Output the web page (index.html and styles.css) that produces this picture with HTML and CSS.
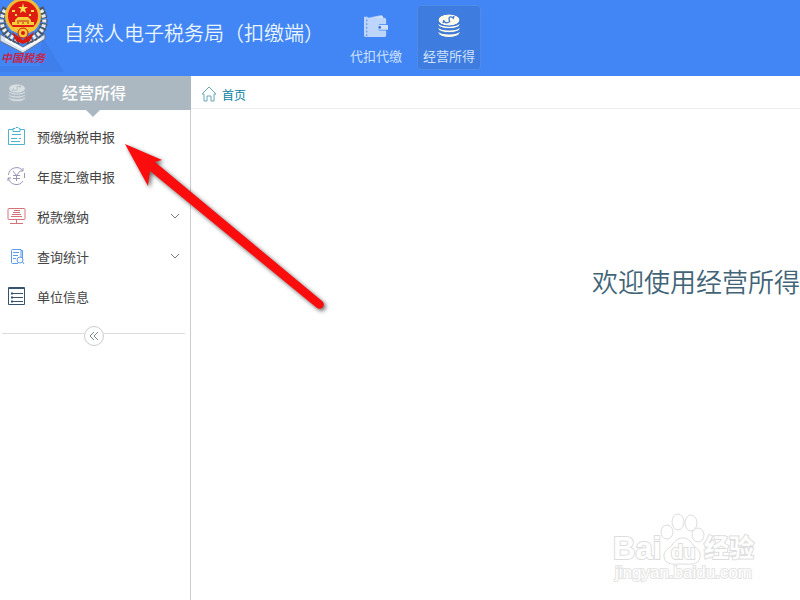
FILE: index.html
```
<!DOCTYPE html>
<html lang="zh-CN">
<head>
  <meta charset="UTF-8" />
  <meta name="viewport" content="width=device-width, initial-scale=1.0"/>
  <title>自然人电子税务局（扣缴端）</title>
  <link rel="stylesheet" href="styles.css">
</head>
<body>

  <svg class="symbols" aria-hidden="true">
    <symbol id="coins" viewBox="0 0 24 24">
      <g fill="currentColor">
        <path d="M1 9c2 4 20 4 22 0v2c-2 5-20 5-22 0z"/>
        <path d="M1 13c2 4 20 4 22 0v2c-2 5-20 5-22 0z"/>
        <path d="M1 17c2 4 20 4 22 0v2c-2 6-20 6-22 0z"/>
        <ellipse cx="12" cy="6" rx="11" ry="6"/>
      </g>
      <path d="M16 3.500c-2-1-4-1-4 1s2 3-1 4c-1 .5-3 0-4-1M17 2l-1 3M7 6l-1 3" fill="none" stroke-width="1.300"/>
    </symbol>
  </svg>

  <header class="header">
    <svg class="logo" viewBox="0 0 64 76" role="img" aria-label="中国税务">
      <path d="M42 36l22 36H0V66h40z" fill="#3e7feb"/>
      <path d="M0 34l23 13 22-13v5L23 53 0 41z" fill="#d9e2ee" stroke="#60718d"/>
      <path d="M5 39l18 10 18-10" fill="none" stroke="#fff" stroke-width="2"/>
      <path d="M6 8C-3 24 4 37 21 41M40 8c9 16 2 29-15 33" fill="none" stroke="#4c5560" stroke-width="7" stroke-dasharray="3 1"/>
      <path d="M5 10C-3 24 4 36 21 41M41 10c8 14 1 26-16 31" fill="none" stroke="#e8ebe9" stroke-width="4" stroke-dasharray="3 2"/>
      <path d="M12 32l11 8 11-8-4 9-7 3-7-3z" fill="#d71912"/>
      <circle cx="23" cy="16" r="18" fill="#f1bd38"/>
      <circle cx="23" cy="16" r="15" fill="#df1c12"/>
      <path d="M23 3l1 4h4l-3 2 1 4-3-2-3 2 1-4-3-2h4z" fill="#ffe04a"/>
      <path d="M12 10h3v2h-3zM31 10h3v2h-3zM15 14h2v2h-2zM29 14h2v2h-2z" fill="#ffe04a"/>
      <path d="M15 20l3-3h10l3 3v2h3v3H12v-3h3z" fill="#f8cf3a"/>
      <path d="M17 21h12M18 24v-2M23 24v-2M28 24v-2" stroke="#bd2815"/>
      <path d="M9 27h28l-3 4H12z" fill="#f6c437"/>
      <circle cx="23" cy="33" r="5" fill="#f7c837" stroke="#d31b13"/>
      <circle cx="23" cy="33" r="2" fill="#d71912"/>
      <text class="logo-text" x="1" y="62">中国税务</text>
    </svg>
    <h1>自然人电子税务局（扣缴端）</h1>
    <nav class="modules">
      <a href="#withhold" class="module">
        <svg class="wallet" viewBox="0 0 28 26" aria-hidden="true">
          <path d="M5 4l15-3 2 3z" fill="#a9c9fa"/>
          <path d="M9 4l12-2 1 3H9z" fill="#d6e5fc"/>
          <path d="M1 3h4v1h18a2 2 0 0 1 2 2v5h-7a4 4 0 0 0 0 7h7v5a2 2 0 0 1-2 2H3a2 2 0 0 1-2-2z" fill="#bdd5fb"/>
          <path d="M4 6v18" stroke="#4b83e4" stroke-dasharray="2 2"/>
          <path d="M18 12h9v5h-9a2 2 0 0 1 0-5z" fill="#cfe0fc"/>
          <circle cx="18" cy="14.500" r="1.500" fill="#3975d5"/>
        </svg>
        <span>代扣代缴</span>
      </a>
      <a href="#business" class="module active">
        <svg class="coins" aria-hidden="true"><use href="#coins"/></svg>
        <span>经营所得</span>
      </a>
    </nav>
  </header>

  <div class="page">
    <aside class="sidebar">
      <div class="sidebar-title">
        <svg class="title-icon" aria-hidden="true"><use href="#coins"/></svg>
        <h2>经营所得</h2>
      </div>
      <nav class="menu">
        <a href="#prepay">
          <svg class="icon teal" viewBox="0 0 20 20" aria-hidden="true">
            <path d="M6 3.500H1.500v15h16v-15H13M6 2.500h2l1-1h2l1 1h1v3H6zM5 8.500h9M4 12.500h6M4 15.500h9M12 12.500h2"/>
          </svg>
          <span>预缴纳税申报</span>
        </a>
        <a href="#annual">
          <svg class="icon purple" viewBox="0 0 20 20" aria-hidden="true">
            <path d="M1.500 9A8 8 0 0 1 16 5M1.500 12A8 8 0 0 0 16 15M17.500 7v5M16 2v3h-3M1 15v-3h3M6 5l3.500 4.500L13 5M9.500 9.500V15M6 9.500h7M6 12.500h7"/>
          </svg>
          <span>年度汇缴申报</span>
        </a>
        <a href="#payment">
          <svg class="icon red" viewBox="0 0 20 20" aria-hidden="true">
            <path d="M2 2.500h15a1 1 0 0 1 1 1v9a1 1 0 0 1-1 1H2a1 1 0 0 1-1-1v-9a1 1 0 0 1 1-1zM7 4.500h6M6 6.500h7M5 8.500h9M4 10.500h11M9.500 14v4M3 17.500h13"/>
          </svg>
          <span>税款缴纳</span>
          <svg class="chevron" viewBox="0 0 10 6" aria-hidden="true"><path d="M1 1l4 4 4-4"/></svg>
        </a>
        <a href="#query">
          <svg class="icon blue" viewBox="0 0 20 20" aria-hidden="true">
            <path d="M11 17.500H5.500a1 1 0 0 1-1-1v-12a1 1 0 0 1 1-1h8.500V11M14 4.500h1.500V12M6 6.500h6M6 9.500h5M6 12.500h3M15 15l2 3"/>
            <circle cx="13" cy="14" r="3"/>
          </svg>
          <span>查询统计</span>
          <svg class="chevron" viewBox="0 0 10 6" aria-hidden="true"><path d="M1 1l4 4 4-4"/></svg>
        </a>
        <a href="#company">
          <svg class="icon navy" viewBox="0 0 20 20" aria-hidden="true">
            <path d="M1.500 1.500h16v17h-16zM1 2.500h17M5 7.500h11M5 11.500h11M5 15.500h11"/>
            <path d="M4 7.500h2M4 11.500h2M4 15.500h2" stroke-width="2"/>
          </svg>
          <span>单位信息</span>
        </a>
      </nav>
      <div class="collapse">
        <button type="button" aria-label="收起菜单">
          <svg viewBox="0 0 10 8" aria-hidden="true"><path d="M5 0L1 4l4 4M9 0L5 4l4 4"/></svg>
        </button>
      </div>
    </aside>

    <main class="content">
      <div class="breadcrumb">
        <a href="#home">
          <svg viewBox="0 0 16 16" aria-hidden="true"><path d="M1 8l7-7 7 7h-2v7h-3v-5H6v5H3V8z"/></svg>
          <span>首页</span>
        </a>
      </div>
      <p class="welcome">欢迎使用经营所得</p>
    </main>
  </div>

  <svg class="arrow" viewBox="0 0 210 180" aria-hidden="true">
    <path d="M5 4l37 16-7 2 167 139a4 4 0 0 1-5 7L30 31l-2 15z"/>
  </svg>

  <svg class="watermark" viewBox="0 0 160 80" aria-hidden="true">
    <g class="paw">
      <ellipse cx="67" cy="24" rx="6" ry="7"/>
      <ellipse cx="78" cy="14" rx="6" ry="8"/>
      <ellipse cx="91" cy="15" rx="6" ry="8"/>
      <ellipse cx="98" cy="27" rx="6" ry="7"/>
      <path d="M72 37c7-10 16-9 21 0 5 4 8 7 7 12-2 9-10 7-18 7s-16 2-18-7c-1-5 4-8 8-12z"/>
    </g>
    <text class="brand" x="13" y="51">Bai</text>
    <text class="du" x="71" y="51">du</text>
    <text class="brand-cn" x="104" y="49">经验</text>
    <text class="site" x="15" y="70">jingyan.baidu.com</text>
  </svg>

</body>
</html>
```
FILE: styles.css
```
* {
  box-sizing: border-box;
}

body {
  margin: 0;
  min-height: 100vh;
  display: flex;
  flex-direction: column;
  position: relative;
  overflow-x: hidden;
  background: #fff;
  color: #444;
  font-family: "Noto Sans CJK SC", sans-serif;
  font-size: 13px;
}

a {
  color: inherit;
  text-decoration: none;
}

h1, h2, p {
  margin: 0;
}

.symbols {
  position: absolute;
  width: 0;
  height: 0;
}

.header {
  display: flex;
  height: 76px;
  background: #4285f4;
  color: #e8f5ff;
}

.logo {
  width: 64px;
  height: 76px;
  flex: none;
}

.logo-text {
  fill: #c5264a;
  font-family: "Noto Sans CJK SC", sans-serif;
  font-size: 11px;
  font-style: italic;
  font-weight: bold;
}

.header h1 {
  font-size: 20px;
  line-height: 66px;
  font-weight: 350;
  white-space: nowrap;
}

.modules {
  display: flex;
  gap: 9px;
  padding: 5px 0 6px 20px;
}

.module {
  display: flex;
  flex-direction: column;
  align-items: center;
  gap: 8px;
  width: 64px;
  padding-top: 8px;
  border: 1px solid transparent;
  border-radius: 4px;
  line-height: 20px;
  color: #cfe2ff;
}

.module.active {
  background: #3e7ce0;
  border-color: #508be9;
}

.wallet,
.coins {
  width: 28px;
  height: 24px;
}

.coins {
  color: #fffbe8;
  stroke: #3975d5;
}

.page {
  display: flex;
  flex: 1;
}

.sidebar {
  width: 191px;
  flex: none;
  border-right: 1px solid #ccc;
}

.sidebar-title {
  position: relative;
  display: flex;
  align-items: center;
  height: 34px;
  margin-right: -1px;
  padding-left: 8px;
  background: #abb8c2;
  color: #fff;
}

.sidebar-title::after {
  content: "";
  position: absolute;
  left: 86px;
  top: 100%;
  border: 7px solid transparent;
  border-top-color: #abb8c2;
  border-bottom: 0;
}

.title-icon {
  width: 18px;
  height: 18px;
  color: #d8dfe3;
  stroke: #abb8c2;
}

.sidebar-title h2 {
  margin-left: 36px;
  font-size: 16px;
  line-height: 32px;
  height: 34px;
  font-weight: 500;
}

.menu {
  padding-top: 6px;
}

.menu a {
  display: flex;
  align-items: center;
  height: 40px;
  padding: 0 10px 0 7px;
}

.icon {
  width: 20px;
  height: 20px;
  margin-right: 10px;
  fill: none;
  stroke: currentColor;
}

.teal { color: #4db4cf; }
.purple { color: #9b95bd; }
.red { color: #d5737c; }
.blue { color: #5c9ceb; }
.navy { color: #38536d; }

.chevron {
  width: 10px;
  height: 6px;
  margin-left: auto;
  fill: none;
  stroke: #777;
}

.collapse {
  display: flex;
  margin: 10px 5px 0 2px;
}

.collapse::before,
.collapse::after {
  content: "";
  flex: 1;
  height: 1px;
  margin-top: 7px;
  background: #ddd;
}

.collapse button {
  display: flex;
  align-items: center;
  justify-content: center;
  width: 20px;
  height: 20px;
  padding: 0;
  border: 1px solid #ccc;
  border-radius: 50%;
  background: #fff;
}

.collapse svg {
  width: 10px;
  height: 8px;
  fill: none;
  stroke: #7b8790;
}

.content {
  flex: 1;
  min-width: 0;
}

.breadcrumb {
  height: 33px;
  padding: 0 10px;
  border-bottom: 1px solid #eee;
  color: #087f9f;
  font-size: 12px;
}

.breadcrumb a {
  display: inline-flex;
  align-items: center;
  gap: 5px;
  height: 36px;
}

.breadcrumb svg {
  width: 16px;
  height: 16px;
  fill: none;
  stroke: #68a7b8;
}

.welcome {
  margin-top: 152px;
  color: #426477;
  font-size: 26px;
  line-height: 40px;
  font-weight: 350;
  text-align: right;
}

.arrow {
  position: absolute;
  left: 120px;
  top: 140px;
  width: 210px;
  height: 180px;
  fill: #fb0d0d;
  filter: drop-shadow(2px 2px 2px rgba(0, 0, 0, 0.6));
  pointer-events: none;
}

.watermark {
  position: absolute;
  right: 40px;
  bottom: 12px;
  width: 160px;
  height: 80px;
  fill: #fff;
  stroke: #ddd;
  pointer-events: none;
}

.watermark text {
  paint-order: stroke;
  stroke-width: 2px;
  font-family: "Liberation Sans", "Noto Sans CJK SC", sans-serif;
}

.watermark .brand {
  font-size: 31px;
  font-weight: bold;
}

.watermark .du {
  font-size: 20px;
  font-weight: bold;
}

.watermark .brand-cn {
  font-size: 25px;
  font-weight: bold;
}

.watermark .site {
  font-size: 17px;
  stroke: #e4e4e4;
}
```
